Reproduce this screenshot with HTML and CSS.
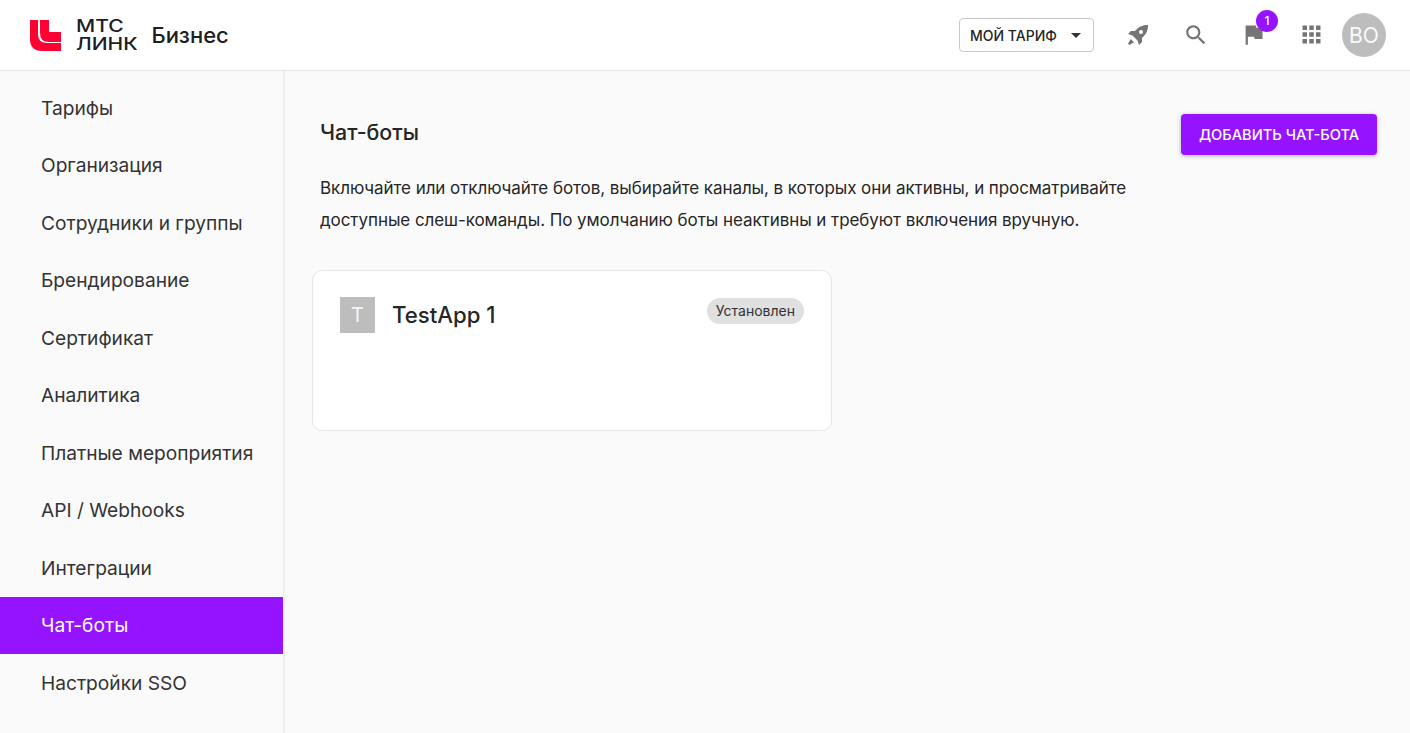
FILE: index.html
```html
<!DOCTYPE html>
<html lang="ru">
<head>
<meta charset="utf-8">
<title>Чат-боты</title>
<link rel="stylesheet" href="styles.css">
</head>
<body>
<header class="topbar">
  <div class="brand">
    <svg class="logo-mark" width="31" height="31" viewBox="0 0 31 31"><path fill="#ff0032" d="M0 0H8V14Q8 23 17 23H31V31H12Q0 31 0 19Z"/><path fill="#ff0032" d="M10 0H19V12H31V22H19Q10 22 10 13Z"/></svg>
    <div class="logo-text"><span>МТС</span><span>ЛИНК</span></div>
    <div class="brand-name">Бизнес</div>
  </div>
  <div class="actions">
    <button class="tariff">МОЙ ТАРИФ<svg class="caret" width="10" height="5" viewBox="0 0 10 5"><path fill="#333" d="M0 0H10L5 5Z"/></svg></button>
    <svg class="icon rocket" width="24" height="24" viewBox="0 0 24 24"><path fill="#757575" fill-rule="evenodd" d="M22 2C22 2 15.5 1.5 11 6L9 8H5L2 11L6.5 12.5L11.5 17.5L13 22L16 19V15L18 13C22.5 8.5 22 2 22 2ZM15 7A2 2 0 1 1 15 11A2 2 0 1 1 15 7ZM4.8 16L8 19.2L3.6 22L2 20.4Z"/></svg>
    <svg class="icon search" width="26" height="26" viewBox="0 0 24 24"><path fill="#757575" d="M15.5 14h-.79l-.28-.27C15.41 12.59 16 11.11 16 9.5 16 5.91 13.09 3 9.5 3S3 5.91 3 9.5 5.91 16 9.5 16c1.61 0 3.09-.59 4.23-1.57l.27.28v.79l5 4.99L20.49 19l-4.99-5zm-6 0C7.01 14 5 11.99 5 9.5S7.01 5 9.5 5 14 7.01 14 9.5 11.99 14 9.5 14z"/></svg>
    <div class="flag-wrap">
      <svg class="icon flag" width="27" height="27" viewBox="0 0 24 24"><path fill="#757575" d="M14.4 6L14 4H5v17h2v-7h5.6l.4 2h7V6z"/></svg>
      <span class="badge">1</span>
    </div>
    <svg class="icon apps" width="27" height="27" viewBox="0 0 24 24"><path fill="#757575" d="M4 8h4V4H4v4zm6 12h4v-4h-4v4zm-6 0h4v-4H4v4zm0-6h4v-4H4v4zm6 0h4v-4h-4v4zm6-10v4h4V4h-4zm-6 4h4V4h-4v4zm6 6h4v-4h-4v4zm0 6h4v-4h-4v4z"/></svg>
    <div class="avatar">BO</div>
  </div>
</header>
<div class="layout">
  <nav class="sidebar">
    <a class="nav-item">Тарифы</a>
    <a class="nav-item">Организация</a>
    <a class="nav-item">Сотрудники и группы</a>
    <a class="nav-item">Брендирование</a>
    <a class="nav-item">Сертификат</a>
    <a class="nav-item">Аналитика</a>
    <a class="nav-item">Платные мероприятия</a>
    <a class="nav-item">API / Webhooks</a>
    <a class="nav-item">Интеграции</a>
    <a class="nav-item active">Чат-боты</a>
    <a class="nav-item">Настройки SSO</a>
  </nav>
  <main class="content">
    <div class="head-row">
      <h1 class="title">Чат-боты</h1>
      <button class="primary">ДОБАВИТЬ ЧАТ-БОТА</button>
    </div>
    <p class="desc">Включайте или отключайте ботов, выбирайте каналы, в которых они активны, и просматривайте доступные слеш-команды. По умолчанию боты неактивны и требуют включения вручную.</p>
    <section class="card">
      <div class="app-icon">T</div>
      <div class="app-name">TestApp 1</div>
      <span class="chip">Установлен</span>
    </section>
  </main>
</div>
</body>
</html>
```
FILE: styles.css
```css
* { box-sizing: border-box; }
html, body { margin: 0; height: 100%; overflow: hidden; }
body { font-family: Inter, "Noto Sans", sans-serif; background: #fafafa; color: #262626; display: flex; flex-direction: column; }
.topbar { height: 71px; flex: none; background: #fff; border-bottom: 1px solid #e6e6e6; display: flex; align-items: center; justify-content: space-between; padding: 0 24px 0 30px; }
.brand { display: flex; align-items: center; }
.logo-mark { display: block; }
.logo-text { display: flex; flex-direction: column; margin-left: 15px; font-size: 17.5px; font-weight: 500; line-height: 18px; color: #1d2023; transform: scaleX(1.2); transform-origin: left center; }
.brand-name { margin-left: 24px; font-size: 22px; font-weight: 500; color: #1d2023; }
.actions { display: flex; align-items: center; }
.tariff { width: 135px; height: 34px; background: #fff; border: 1px solid #c8c8c8; border-radius: 4px; font: 500 14px Inter, sans-serif; color: #262626; display: flex; align-items: center; justify-content: space-between; padding: 0 12px 0 10px; margin-right: 32px; }
.icon { display: block; flex: none; }
.rocket { margin-right: 33px; }
.search { margin-right: 30px; }
.flag-wrap { position: relative; width: 27px; height: 27px; margin: 0 31px 2px 1px; }
.badge { position: absolute; left: 16px; top: -11px; width: 22px; height: 22px; border-radius: 50%; background: #9613ff; color: #fff; font-size: 12px; font-weight: 500; display: flex; align-items: center; justify-content: center; }
.apps { margin: 0 17px 2px 0; }
.avatar { width: 44px; height: 44px; border-radius: 50%; background: #bdbdbd; color: #fafafa; font-size: 21px; display: flex; align-items: center; justify-content: center; }
.layout { flex: 1; display: flex; min-height: 0; }
.sidebar { width: 285px; flex: none; border-right: 2px solid #eeeeee; padding-top: 8px; display: flex; flex-direction: column; }
.nav-item { height: 57.5px; flex: none; display: flex; align-items: center; padding-left: 41px; font-size: 19.15px; color: #333; }
.nav-item.active { background: #9613ff; color: #fff; }
.content { flex: 1; padding: 43px 33px 0 35px; }
.head-row { display: flex; justify-content: space-between; align-items: flex-start; }
.title { margin: 6px 0 0; font-size: 21.4px; font-weight: 500; line-height: 24px; color: #262626; }
.primary { width: 196px; height: 41px; background: #9613ff; color: #fff; border: 0; border-radius: 4px; font: 500 14.6px Inter, sans-serif; box-shadow: 0 1px 4px rgba(0,0,0,.3); }
.desc { margin: 17px 0 0; width: 830px; font-size: 17px; letter-spacing: -0.07px; line-height: 32px; color: #262626; }
.card { margin: 34px 0 0 -8px; width: 520px; height: 161px; background: #fff; border: 1px solid #e6e6e6; border-radius: 10px; padding: 26px 27px; display: flex; align-items: flex-start; }
.app-icon { width: 35px; height: 36px; background: #bdbdbd; color: #f5f5f5; font-size: 20px; display: flex; align-items: center; justify-content: center; }
.app-name { margin: 3px 0 0 17px; font-size: 22.2px; font-weight: 500; line-height: 30px; color: #262626; flex: 1; }
.chip { height: 26px; margin-top: 1px; padding: 0 9px; border-radius: 13px; background: #e0e0e0; font-size: 14px; line-height: 26px; color: #333; }
```
